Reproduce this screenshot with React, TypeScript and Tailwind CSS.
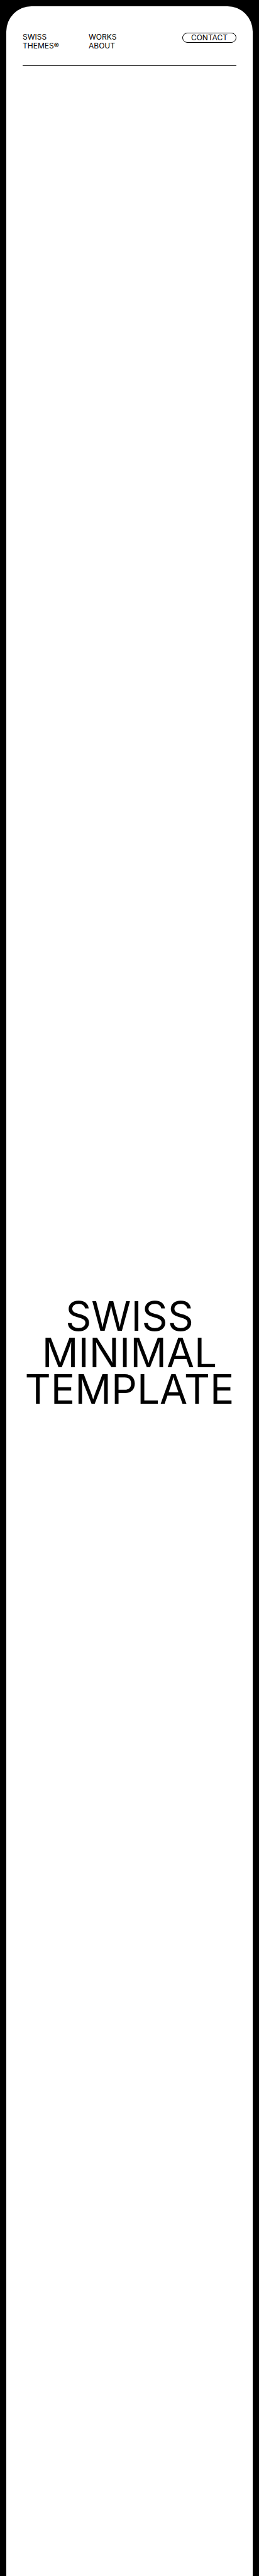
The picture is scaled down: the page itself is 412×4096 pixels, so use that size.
const navLinks = [
  { name: "Works", href: "#works" },
  { name: "About", href: "#about" },
]

function Header() {
  return (
    <header className="mx-[26px] grid grid-cols-[105px_1fr_auto] items-start border-b border-black pt-[42px] pb-[24px] text-[12px] leading-[14px] uppercase">
      <a href="#home">
        Swiss
        <br />
        Themes<span className="font-semibold">®</span>
      </a>
      <nav className="flex flex-col items-start">
        {navLinks.map((link) => (
          <a key={link.name} href={link.href}>
            {link.name}
          </a>
        ))}
      </nav>
      <button type="button" className="rounded-full border border-black px-[13px] uppercase">
        Contact
      </button>
    </header>
  )
}

function Hero() {
  return (
    <main id="home" className="flex min-h-screen items-center justify-center pb-1">
      <h1 className="text-center text-[64px] leading-[58px] uppercase">
        Swiss
        <br />
        Minimal
        <br />
        Template
      </h1>
    </main>
  )
}

export default function App() {
  return (
    <div className="h-screen overflow-hidden bg-black px-[10px] pt-[10px] font-['Inter','Liberation_Sans',sans-serif] text-black">
      <div className="rounded-t-[40px] bg-white">
        <Header />
        <Hero />
      </div>
    </div>
  )
}
